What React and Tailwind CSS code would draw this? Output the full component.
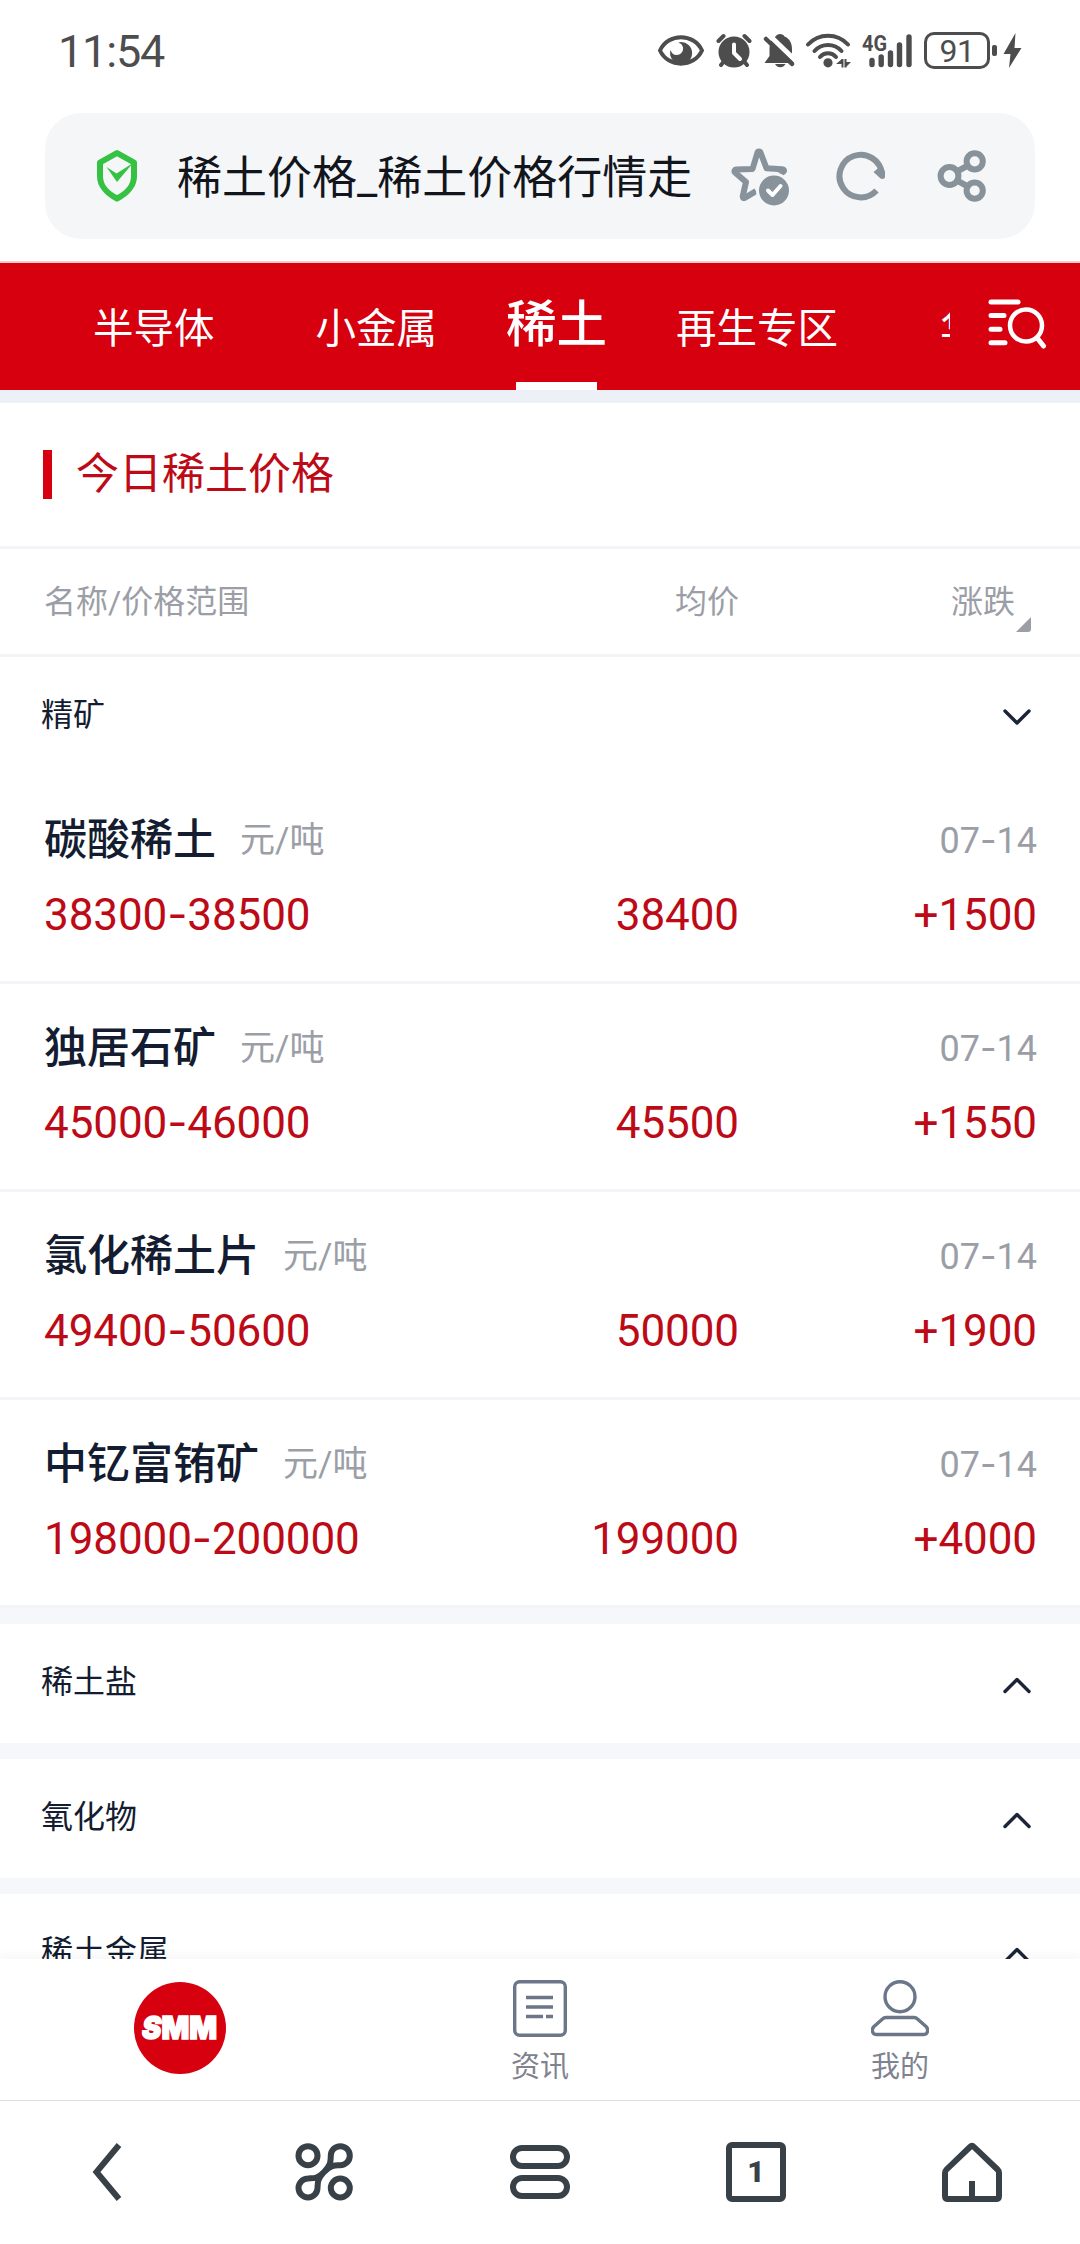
import React, { useState } from 'react';

const tabs = [
  { name: '半导体', cls: 'ml-[93px] text-[40.5px]' },
  { name: '小金属', cls: 'ml-[101px] text-[40.5px]' },
  { name: '稀土', cls: 'ml-[69px] text-[50.5px] font-medium', active: true },
  { name: '再生专区', cls: 'ml-[69px] text-[40.5px]' },
  { name: '华', cls: 'ml-[102px] text-[40.5px]' },
]

const prices = [
  { name: '碳酸稀土', low: '38300', high: '38500', avg: '38400', diff: '+1500' },
  { name: '独居石矿', low: '45000', high: '46000', avg: '45500', diff: '+1550' },
  { name: '氯化稀土片', low: '49400', high: '50600', avg: '50000', diff: '+1900' },
  { name: '中钇富铕矿', low: '198000', high: '200000', avg: '199000', diff: '+4000' },
]

// Inter has a wider hyphen than Roboto
const Dash = () => <span className="font-['Inter'] leading-[0]">-</span>

function StatusBar() {
  return (
    <div className="flex h-[113px] shrink-0 items-start pl-[58px] text-[#4d4d4d]">
      <span className="mt-[29px] w-[600px] text-[45px] leading-none tracking-[-1.2px]">11:54</span>
      <svg className="mt-[30px]" width="46" height="42" viewBox="658 30 46 42" fill="none">
        <path d="M660 50.5C668 32.8 694 32.8 702 50.5C694 68 668 68 660 50.5Z" stroke="currentColor" strokeWidth="4" strokeLinejoin="round" />
        <path d="M680 42a11 11 0 1 1-9.5 8c1 3 3 5 6 5 5 0 8-5 6-9-1-2-2-3-4-3z" fill="currentColor" />
      </svg>
      <svg className="ml-[12px] mt-[30px]" width="36" height="42" viewBox="716 30 36 42" fill="none">
        <circle cx="734" cy="52" r="15.5" fill="currentColor" />
        <path d="M718.5 41l5-5M749.5 41l-5-5M721 65l4-5M747 65l-4-5" stroke="currentColor" strokeWidth="4" strokeLinecap="round" />
        <path d="M734 44.5v8.5l6 6" stroke="#fff" strokeWidth="4" strokeLinecap="round" strokeLinejoin="round" />
      </svg>
      <svg className="ml-[11px] mt-[30px]" width="32" height="42" viewBox="763 30 32 42" fill="none">
        <path d="M780 34c2 0 4 1 4.500 2.500 5 2 7.500 6.500 7.500 12.500v8l2 6H764.500l5-7v-7c0-6 2-10.500 6-12.500 1-1.500 2.500-2.500 4.500-2.500z" fill="currentColor" />
        <path d="M768 34l30 29" stroke="#fff" strokeWidth="5" />
        <path d="M766 39l26 25" stroke="currentColor" strokeWidth="4.500" strokeLinecap="round" />
        <path d="M775 64h10.500c-1 2-3 3.300-5.200 3.300s-4.300-1.300-5.300-3.300z" fill="currentColor" />
      </svg>
      <svg className="ml-[10px] mt-[30px]" width="46" height="42" viewBox="805 30 46 42" fill="none">
        <path d="M808 44.500a27 27 0 0 1 40 0M814.500 51a18 18 0 0 1 27 0M820 57a10.500 10.500 0 0 1 16 0" stroke="currentColor" strokeWidth="4" strokeLinecap="round" />
        <circle cx="828" cy="62.800" r="4.600" fill="currentColor" />
        <path d="M842.500 59v8.500M845.500 59v8.500" stroke="currentColor" strokeWidth="2" />
        <path d="M842 59l-6 5h6zM846 67l5-5h-5z" fill="currentColor" />
      </svg>
      <svg className="ml-[10px] mt-[30px]" width="52" height="42" viewBox="861 30 52 42" fill="none">
        <text x="862" y="50.500" textLength="25" lengthAdjust="spacingAndGlyphs" className="text-[22px] font-bold" fill="currentColor">4G</text>
        <path d="M872 60.500v4M881.200 57v7.500M890.500 53v11.500M899.500 45v19.500M909 37v27.500" stroke="currentColor" strokeWidth="5.400" strokeLinecap="round" />
      </svg>
      <div className="ml-[11px] mt-[32px] flex h-[37px] w-[66px] items-center justify-center rounded-[10px] border-3 border-[#4d4d4d] text-[32px] leading-none tracking-[-0.5px]">91</div>
      <div className="ml-[2px] mt-[45px] h-[11px] w-[5px] rounded-[2px] bg-[#4d4d4d]" />
      <svg className="ml-[6px] mt-[30px]" width="20" height="42" viewBox="1003 30 20 42">
        <path d="M1015.500 33L1003.500 54h7l-1.500 14L1021.500 48h-7z" fill="currentColor" />
      </svg>
    </div>
  )
}

function AddressBar() {
  return (
    <div className="mx-[45px] flex h-[126px] shrink-0 items-center rounded-[36px] bg-[#f4f6f8] text-[#87929a]">
      <svg className="ml-[52px]" width="40" height="54" viewBox="97 149 40 54" fill="none">
        <path d="M117 153l17 9.500v14c0 9-7 17-17 22-10-5-17-13-17-22v-14z" stroke="#35c242" strokeWidth="6" strokeLinejoin="round" />
        <path d="M106.500 167l10 6.500 16.500-10.500-16 19z" fill="#35c242" />
      </svg>
      <span className="ml-[40px] w-[516px] whitespace-nowrap pt-[4px] text-[45px] leading-none text-[#12161c]">稀土价格_稀土价格行情走</span>
      <svg className="ml-[37px]" width="60" height="60" viewBox="730 146.500 60 60" fill="none">
        <path d="M780 175l4-3.500c0-1-1-1.700-2-1.800l-15.500-1L760.500 153c-.5-1.500-2.500-1.500-3 0L752.500 169.500l-16.500.500c-1.500.200-2 2-1 3l11 9.500-3.300 14.500c0 1.500 1 2 2.300 1.200l11-6.500" stroke="currentColor" strokeWidth="6" strokeLinejoin="round" />
        <circle cx="774" cy="191" r="18" fill="#f4f6f8" />
        <circle cx="774" cy="191" r="15" fill="currentColor" />
        <path d="M768 191l4.500 4.500 8-9" stroke="#fff" strokeWidth="4" strokeLinecap="round" strokeLinejoin="round" />
      </svg>
      <svg className="ml-[46px]" width="50" height="54" viewBox="836 149 50 54" fill="none">
        <path d="M876.500 190.500A21.300 21.300 0 1 1 882 174" stroke="currentColor" strokeWidth="6" />
        <path d="M873.500 172l5.500-4.500 6 3.500v6c0 2-3 2.500-4.500 1.500z" fill="currentColor" />
      </svg>
      <svg className="ml-[51px]" width="50" height="54" viewBox="937 149 50 54" fill="none" stroke="currentColor" strokeWidth="6">
        <circle cx="949.500" cy="176" r="8.900" />
        <circle cx="974.700" cy="161.300" r="8.100" />
        <circle cx="974.700" cy="190.600" r="8.100" />
        <path d="M957 171.500l10-5.500M957 180.500l10 5.500" />
      </svg>
    </div>
  )
}

function TabBar() {
  return (
    <div className="mt-[22px] flex h-[129px] shrink-0 border-t-2 border-[#f8c9cd] bg-[#d6000f] text-white">
      <div className="flex w-[950px] overflow-hidden">
        {tabs.map(t => (
          <div key={t.name} className={`flex shrink-0 flex-col items-center justify-between whitespace-nowrap ${t.cls}`}>
            <span className={t.active ? 'mt-[37px] leading-none' : 'mt-[46px] leading-none'}>{t.name}</span>
            {t.active && <span className="h-[8px] w-[81px] bg-white" />}
          </div>
        ))}
      </div>
      <svg className="ml-[37px] mt-[35px]" width="60" height="52" viewBox="987 299 60 52" fill="none" stroke="#fff" strokeWidth="5" strokeLinecap="round">
        <path d="M991 303h27M991 316.500h13M991 330.300h9M991 343.800h14" />
        <circle cx="1026" cy="326.500" r="16" strokeWidth="4.500" />
        <path d="M1038 340l5.500 7" />
      </svg>
    </div>
  )
}

function Chevron({ open }) {
  return (
    <svg width="30" height="20" viewBox="0 0 30 20" fill="none" stroke="#1b2438" strokeWidth="3.400" strokeLinecap="round" strokeLinejoin="round">
      <path d={open ? 'M3 4l12 12L27 4' : 'M3 17.500L15 5.500l12 12'} />
    </svg>
  )
}

function SectionHead({ name, open, onClick }) {
  return (
    <div onClick={onClick} className="flex h-[119px] shrink-0 items-center justify-between bg-white pl-[41px] pr-[48px]">
      <span className="pb-[3px] text-[32px] leading-none text-[#131c30]">{name}</span>
      <Chevron open={open} />
    </div>
  )
}

function PriceRow({ item }) {
  return (
    <div className="h-[208px] shrink-0 border-b-[3px] border-[#f2f4f8] bg-white pl-[44px] pr-[43px] pt-[43px]">
      <div className="flex h-[43px] items-center justify-between leading-none">
        <div className="flex items-center">
          <span className="text-[43px] font-medium text-[#131c30]">{item.name}</span>
          <span className="ml-[24px] text-[35px] text-[#9b9ea6]">元/吨</span>
        </div>
        <span className="text-[36px] text-[#9b9ea6]">07<Dash />14</span>
      </div>
      <div className="mt-[31px] flex text-[44px] leading-none tracking-[-0.1px] text-[#bd0a17]">
        <span className="w-[400px]">{item.low}<Dash />{item.high}</span>
        <span className="w-[295px] text-right">{item.avg}</span>
        <span className="flex-1 text-right">{item.diff}</span>
      </div>
    </div>
  )
}

function SiteNav() {
  return (
    <div className="grid h-[141px] shrink-0 grid-cols-3 bg-white text-[29px] leading-none text-[#7f828f] shadow-[0_-4px_10px_rgba(0,0,0,0.04)]">
      <div className="flex justify-center pt-[23px]">
        <svg width="92" height="92" viewBox="0 0 92 92">
          <circle cx="46" cy="46" r="46" fill="#d6000f" />
          <text x="8" y="57" textLength="75" lengthAdjust="spacingAndGlyphs" fill="#fff" stroke="#fff" strokeWidth="1.500" className="font-['Inter'] text-[32px] font-black"><tspan className="italic">S</tspan>MM</text>
        </svg>
      </div>
      <div className="flex flex-col items-center pt-[21px]">
        <svg width="54" height="57" viewBox="0 0 54 57" fill="none" stroke="#6b7689" strokeWidth="3.400">
          <rect x="1.700" y="1.700" width="50.600" height="53.600" rx="5" />
          <path d="M13 17.500h27M13 27h27M13 36.500h17M33 36.500h7" />
        </svg>
        <span className="mt-[16px]">资讯</span>
      </div>
      <div className="flex flex-col items-center pt-[21px]">
        <svg width="58" height="57" viewBox="0 0 58 57" fill="none" stroke="#6b7689" strokeWidth="3.400">
          <circle cx="29" cy="16.700" r="15" />
          <path d="M15 37.500h28q2 0 3.500 1.500L55 46.500c3 3 1.500 8-2 8H5c-3.500 0-5-5-2-8l8.500-7.500Q13 37.500 15 37.500z" />
        </svg>
        <span className="mt-[16px]">我的</span>
      </div>
    </div>
  )
}

function BrowserNav() {
  return (
    <div className="grid h-[144px] shrink-0 grid-cols-5 justify-items-center border-t border-[#dcdfe0] bg-white pt-[40px] text-[#384147]">
      <svg width="62" height="62" viewBox="77 2141 62 62" fill="none" stroke="currentColor" strokeWidth="6">
        <path d="M119 2145l-22.500 27 22.500 27" />
      </svg>
      <svg width="62" height="62" viewBox="293 2141 62 62" fill="none" stroke="currentColor" strokeWidth="6">
        <circle cx="308" cy="2155.700" r="9.500" />
        <circle cx="340.300" cy="2188" r="9.500" />
        <path d="M324 2172C331.500 2164 330.500 2161 330.800 2155.700a9.500 9.500 0 1 1 9.500 9.500C335 2165.500 332 2164.500 324 2172C316.500 2179.500 313 2178 308 2178.500a9.500 9.500 0 1 0 9.500 9.500C317.800 2183 317 2179.500 324 2172z" />
      </svg>
      <svg width="62" height="62" viewBox="509 2141 62 62" fill="none" stroke="currentColor" strokeWidth="6">
        <rect x="513" y="2148" width="54" height="18" rx="9" />
        <rect x="513" y="2178" width="54" height="18" rx="9" />
      </svg>
      <div className="mt-px flex h-[60px] w-[60px] items-center justify-center rounded-[6px] border-6 border-[#384147] text-[30px] leading-none font-black">1</div>
      <svg width="62" height="62" viewBox="941 2141 62 62" fill="none" stroke="currentColor" strokeWidth="6">
        <path d="M945 2173q0-2 1.500-3.500L970 2147q2-2 4 0l23.500 22.500q1.500 1.500 1.500 3.500v23q0 3-3 3H948q-3 0-3-3z" />
        <path d="M972 2181v18" />
      </svg>
    </div>
  )
}

export default function App() {
  const [open, setOpen] = useState(true)

  return (
    <div className="flex h-[2244px] w-[1080px] flex-col overflow-hidden bg-white font-['Roboto','Noto_Sans_CJK_SC',sans-serif]">
      <StatusBar />
      <AddressBar />
      <TabBar />

      <main className="flex min-h-0 flex-1 flex-col overflow-hidden bg-[#f6f7fa]">
        <div className="h-[13px] shrink-0 bg-[#edf0f6]" />
        <div className="flex h-[146px] shrink-0 items-center border-b-[3px] border-[#f2f4f8] bg-white pl-[43px]">
          <div className="h-[49px] w-[9px] bg-[#d6000f]" />
          <h1 className="ml-[24px] text-[43px] leading-none text-[#bd0a17]">今日稀土价格</h1>
        </div>

        <div className="flex h-[108px] shrink-0 items-center border-b-[3px] border-[#f2f4f8] bg-white pl-[44px] text-[32px] leading-none text-[#9b9ea6]">
          <span className="w-[400px]">名称/价格范围</span>
          <span className="w-[295px] text-right">均价</span>
          <span className="w-[276px] text-right">涨跌</span>
          <svg className="mt-[46px]" width="16" height="15" viewBox="0 0 16 15">
            <path d="M16 0v12q0 3-3 3H1z" fill="#9b9ea6" />
          </svg>
        </div>

        <SectionHead name="精矿" open={open} onClick={() => setOpen(!open)} />
        {open && prices.map(p => <PriceRow key={p.name} item={p} />)}
        <div className="mt-[16px] flex shrink-0 flex-col gap-[16px]">
          {['稀土盐', '氧化物', '稀土金属'].map(n => <SectionHead key={n} name={n} />)}
        </div>
      </main>

      <SiteNav />
      <BrowserNav />
    </div>
  )
}
